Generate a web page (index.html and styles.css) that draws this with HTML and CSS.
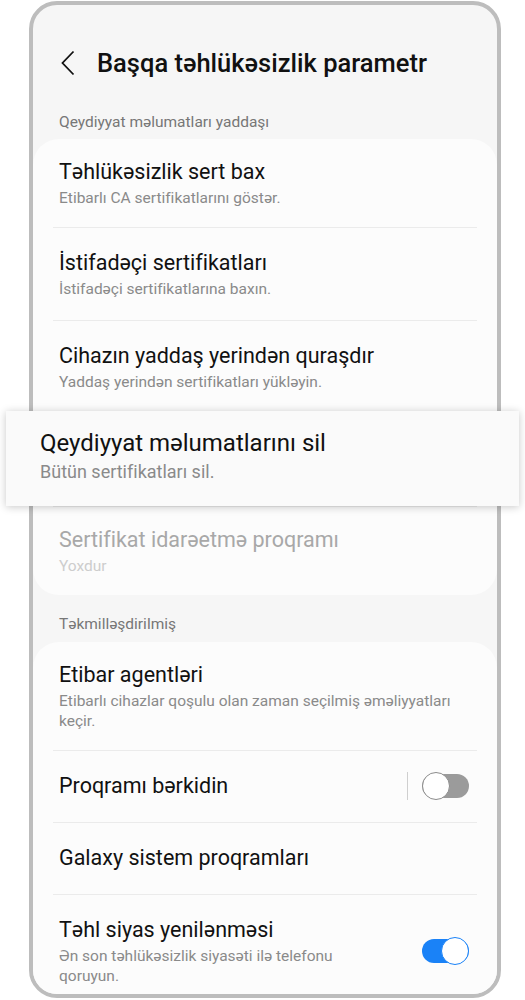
FILE: index.html
```html
<!DOCTYPE html>
<html lang="az">

<head>
    <meta charset="UTF-8">
    <meta name="viewport" content="width=device-width, initial-scale=1.0">
    <title>Başqa təhlükəsizlik parametr</title>
    <link rel="stylesheet" href="styles.css">
</head>

<body>
    <div class="screen">
        <div class="phone">
            <header class="topbar">
                <svg class="back" width="14" height="26" viewBox="0 0 14 26">
                    <path d="M12.5 1.5 L1.5 13 L12.5 24.5" fill="none" stroke="#111" stroke-width="1.8" />
                </svg>
                <h1>Başqa təhlükəsizlik parametr</h1>
            </header>

            <p class="section">Qeydiyyat məlumatları yaddaşı</p>
            <ul class="card">
                <li class="item first">
                    <div class="txt">
                        <p class="title">Təhlükəsizlik sert bax</p>
                        <p class="sub">Etibarlı CA sertifikatlarını göstər.</p>
                    </div>
                </li>
                <li class="item">
                    <div class="txt">
                        <p class="title">İstifadəçi sertifikatları</p>
                        <p class="sub">İstifadəçi sertifikatlarına baxın.</p>
                    </div>
                </li>
                <li class="item">
                    <div class="txt">
                        <p class="title">Cihazın yaddaş yerindən quraşdır</p>
                        <p class="sub">Yaddaş yerindən sertifikatları yükləyin.</p>
                    </div>
                </li>
                <li class="item under">
                    <div class="txt">
                        <p class="title">Qeydiyyat məlumatlarını sil</p>
                        <p class="sub">Bütün sertifikatları sil.</p>
                    </div>
                </li>
                <li class="item last off">
                    <div class="txt">
                        <p class="title">Sertifikat idarəetmə proqramı</p>
                        <p class="sub">Yoxdur</p>
                    </div>
                </li>
            </ul>

            <p class="section">Təkmilləşdirilmiş</p>
            <ul class="card">
                <li class="item first">
                    <div class="txt">
                        <p class="title">Etibar agentləri</p>
                        <p class="sub">Etibarlı cihazlar qoşulu olan zaman seçilmiş əməliyyatları keçir.</p>
                    </div>
                </li>
                <li class="item single">
                    <div class="txt">
                        <p class="title">Proqramı bərkidin</p>
                    </div>
                    <span class="vline"></span>
                    <span class="switch">
                        <span class="track"></span>
                        <span class="knob"></span>
                    </span>
                </li>
                <li class="item single">
                    <div class="txt">
                        <p class="title">Galaxy sistem proqramları</p>
                    </div>
                </li>
                <li class="item">
                    <div class="txt">
                        <p class="title">Təhl siyas yenilənməsi</p>
                        <p class="sub">Ən son təhlükəsizlik siyasəti ilə telefonu qoruyun.</p>
                    </div>
                    <span class="switch on">
                        <span class="track"></span>
                        <span class="knob"></span>
                    </span>
                </li>
            </ul>
        </div>

        <!-- kartdan yuxari qalxan element -->
        <div class="popup">
            <p class="title">Qeydiyyat məlumatlarını sil</p>
            <p class="sub">Bütün sertifikatları sil.</p>
        </div>
    </div>
</body>

</html>
```

FILE: styles.css
```css
* {
    margin: 0;
    padding: 0;
    box-sizing: border-box;
    font-family: Roboto, "Noto Sans", sans-serif;
}

body {
    background-color: #ffffff;
    color: #111111;
}

.screen {
    position: relative;
    width: 525px;
    height: 1000px;
    padding-top: 1px;
}

.phone {
    margin-left: 29px;
    width: 472px;
    height: 997px;
    border: 4px solid #bdbdbd;
    border-radius: 28px;
    background-color: #f6f6f6;
    overflow: hidden;
}

.topbar {
    display: flex;
    align-items: center;
    padding-top: 42px;
    padding-left: 28px;
    height: 74px;
}

.back {
    display: block;
    margin-right: 22px;
    margin-top: -1px;
}

h1 {
    font-size: 25.5px;
    font-weight: 500;
    line-height: 32px;
    color: #111111;
}

.section {
    padding: 33px 26px 7px;
    font-size: 15.5px;
    line-height: 20px;
    color: #777777;
}

.card + .section {
    padding-top: 19px;
    padding-bottom: 8px;
}

.card {
    list-style: none;
    background-color: #fcfcfc;
    border-radius: 26px;
}

.item {
    display: flex;
    align-items: center;
    padding: 22px 28px 21px 26px;
    position: relative;
}

.item + .item::before {
    content: "";
    position: absolute;
    top: 0;
    left: 20px;
    right: 20px;
    height: 1px;
    background-color: #ebebeb;
}

.item.first {
    padding-top: 19px;
    padding-bottom: 19px;
}

.item.last {
    padding-top: 20px;
    padding-bottom: 19px;
}

.item.single {
    padding-top: 22px;
    padding-bottom: 22px;
}

.item.under .txt {
    visibility: hidden;
}

.txt {
    flex: 1;
    min-width: 0;
}

.title {
    font-size: 21.5px;
    line-height: 28px;
    color: #111111;
}

.sub {
    margin-top: 2px;
    font-size: 15.5px;
    line-height: 20px;
    color: #8a8a8a;
}

.off .title {
    color: #a8a8a8;
}

.off .sub {
    color: #cdcdcd;
}

.vline {
    width: 1px;
    height: 28px;
    background-color: #cfcfcf;
    margin-right: 14px;
}

.switch {
    position: relative;
    flex: none;
    width: 47px;
    height: 28px;
    display: flex;
    align-items: center;
}

.track {
    width: 100%;
    height: 24px;
    border-radius: 12px;
    background-color: #9b9b9b;
}

.knob {
    position: absolute;
    top: 0;
    left: 0;
    width: 28px;
    height: 28px;
    border-radius: 50%;
    background-color: #ffffff;
    border: 1.5px solid #8c8c8c;
}

.switch.on {
    margin-left: 40px;
}

.switch.on .track {
    background-color: #1a82f7;
}

.switch.on .knob {
    left: auto;
    right: 0;
    border-color: #1a82f7;
}

.popup {
    position: absolute;
    top: 411px;
    left: 6px;
    width: 513px;
    height: 95px;
    padding: 17px 34px 0;
    background-color: #fafafa;
    box-shadow: 0px 1px 8px rgba(0, 0, 0, 0.22);
}

.popup .title {
    font-size: 24px;
    line-height: 30px;
}

.popup .sub {
    font-size: 18px;
    line-height: 22px;
    margin-top: 3px;
}
```
